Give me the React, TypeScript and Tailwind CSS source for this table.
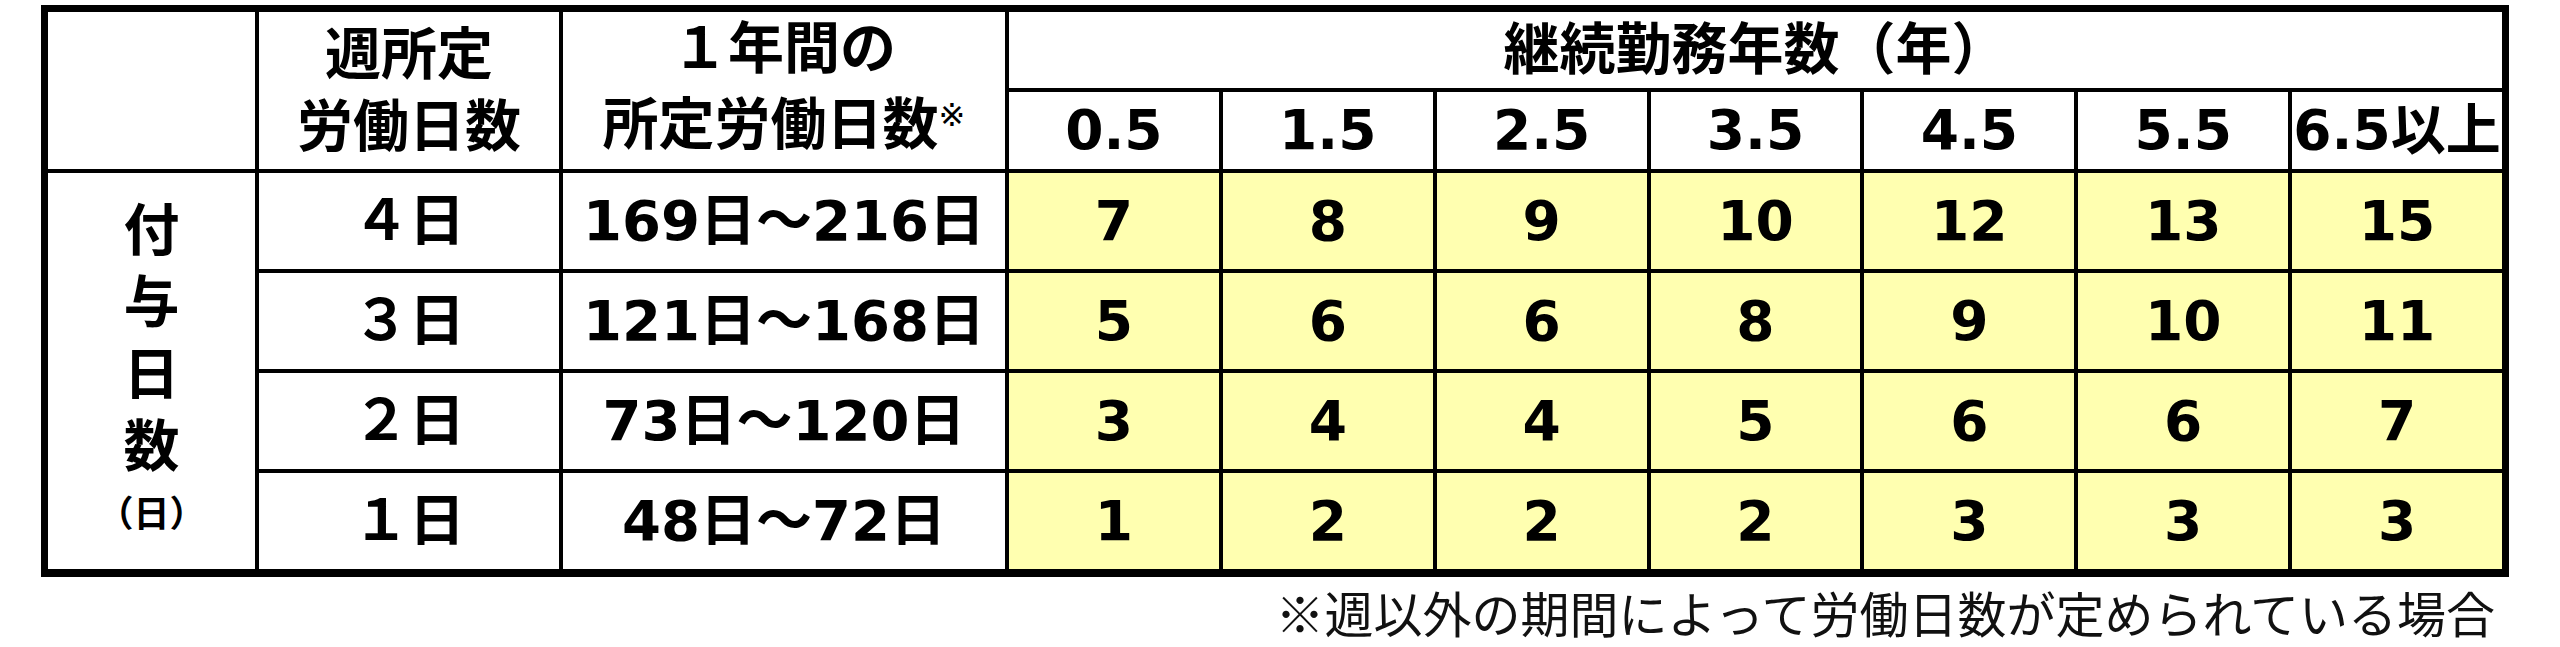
import React from "react";

const years = ["0.5", "1.5", "2.5", "3.5", "4.5", "5.5", "6.5以上"];

const rows: { week: string; year: string; vals: string[] }[] = [
  { week: "４日", year: "169日～216日", vals: ["7", "8", "9", "10", "12", "13", "15"] },
  { week: "３日", year: "121日～168日", vals: ["5", "6", "6", "8", "9", "10", "11"] },
  { week: "２日", year: "73日～120日", vals: ["3", "4", "4", "5", "6", "6", "7"] },
  { week: "１日", year: "48日～72日", vals: ["1", "2", "2", "2", "3", "3", "3"] },
];

export default function App() {
  return (
    <div className="w-[2560px] h-[647px] bg-white pt-[5px] pl-[41px] text-black font-[family-name:'DejaVu_Sans','Noto_Sans_CJK_JP',sans-serif]">
      <div className="w-[2468px] bg-black border-black border-x-[7px] border-t-[7px] border-b-[8px]">
        <div className="grid grid-cols-[207px_300px_442px_repeat(7,1fr)] grid-rows-[76px_77px_repeat(4,96px)] gap-[4px] font-bold">
          <div className="row-span-2 bg-white" />
          <div className="row-span-2 bg-white flex flex-col items-center justify-center text-[56px] leading-[72px]">
            <span>週所定</span>
            <span>労働日数</span>
          </div>
          <div className="row-span-2 bg-white flex flex-col items-center justify-center text-[56px] leading-[76px]">
            <span>１年間の</span>
            <span>
              所定労働日数
              <span className="relative -top-[18px] text-[32px] font-normal">※</span>
            </span>
          </div>
          <div className="col-span-7 bg-white flex items-center justify-center text-[56px] leading-none">
            継続勤務年数（年）
          </div>
          {years.map((y) => (
            <div key={y} className="bg-white flex items-center justify-center text-[55px] leading-none whitespace-nowrap">
              {y}
            </div>
          ))}
          <div className="row-span-4 bg-white flex flex-col items-center justify-center text-[56px] leading-[72px]">
            <span>付</span>
            <span>与</span>
            <span>日</span>
            <span>数</span>
            <span className="text-[36px] leading-[64px]">（日）</span>
          </div>
          {rows.map((r) => (
            <React.Fragment key={r.week}>
              <div className="bg-white flex items-center justify-center text-[56px] leading-none">{r.week}</div>
              <div className="bg-white flex items-center justify-center text-[56px] leading-none whitespace-nowrap">{r.year}</div>
              {r.vals.map((v, i) => (
                <div key={i} className="bg-[#ffffb0] flex items-center justify-center text-[55px] leading-none">
                  {v}
                </div>
              ))}
            </React.Fragment>
          ))}
        </div>
      </div>
      <div className="w-[2468px] mt-[10px] pr-[14px] text-right text-[49px] leading-none font-normal text-[#111] font-[family-name:'Noto_Sans_CJK_JP',sans-serif]">
        ※週以外の期間によって労働日数が定められている場合
      </div>
    </div>
  );
}
